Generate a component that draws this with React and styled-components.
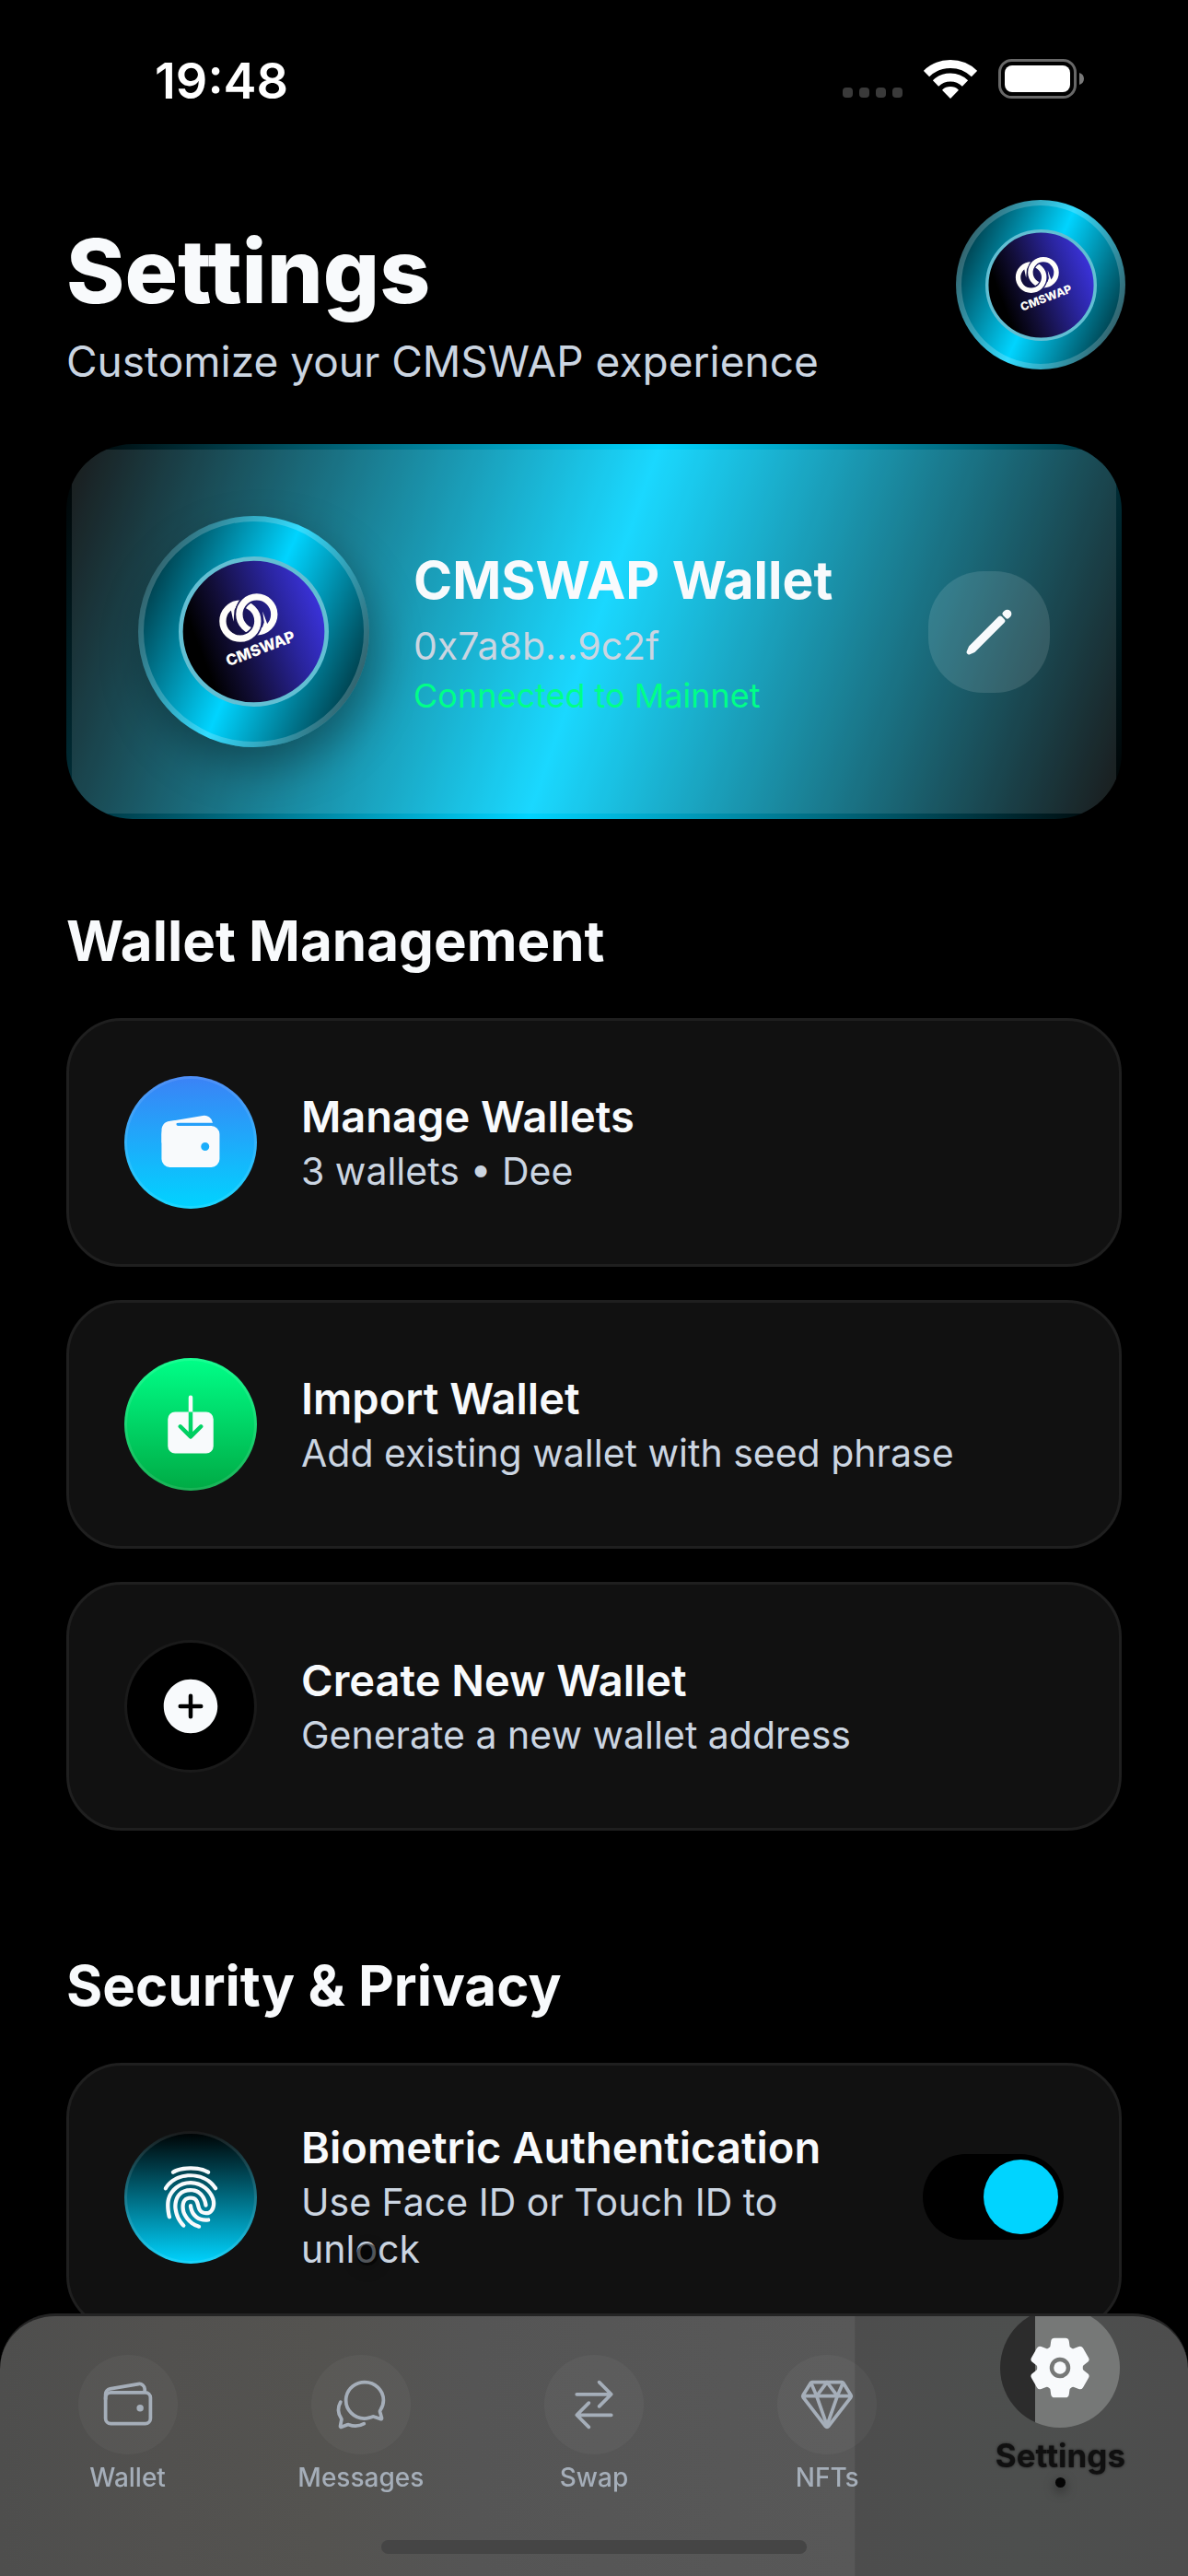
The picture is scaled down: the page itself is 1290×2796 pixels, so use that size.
import React, { useState } from "react";
import styled, { createGlobalStyle } from "styled-components";
import {
  IoWallet,
  IoDownload,
  IoAddCircle,
  IoFingerPrint,
  IoPencil,
  IoWalletOutline,
  IoChatbubblesOutline,
  IoSwapHorizontalOutline,
  IoDiamondOutline,
  IoSettings,
} from "react-icons/io5";

const GlobalStyle = createGlobalStyle`
  *, *::before, *::after { box-sizing: border-box; }
  body {
    margin: 0;
    background: #000;
    color: #f8fafc;
    font-family: Inter, "Liberation Sans", sans-serif;
  }
  h1, h2, h3, p, ul { margin: 0; padding: 0; }
  button { font: inherit; color: inherit; border: 0; padding: 0; cursor: pointer; }
  svg { display: block; flex: none; }
`;

const Screen = styled.div`
  min-height: 100vh;
  overflow: hidden;
`;

/* Status bar */

const StatusBar = styled.div`
  display: flex;
  align-items: flex-start;
  justify-content: space-between;
  height: 177px;
  padding: 56px 112px 0 168px;
`;

const Clock = styled.time`
  font-size: 54px;
  font-weight: 600;
  line-height: 64px;
  color: #fff;
`;

const StatusIcons = styled.div`
  display: flex;
  align-items: flex-end;
  gap: 23px;
  padding-top: 8px;
`;

/* Header */

const Content = styled.main`
  padding: 40px 72px 320px;
`;

const Header = styled.header`
  display: flex;
  align-items: flex-start;
  justify-content: space-between;
  margin-right: -4px;
`;

const HeaderText = styled.div`
  padding-top: 20px;
`;

const Title = styled.h1`
  font-size: 96px;
  font-weight: 800;
  line-height: 115px;
`;

const Subtitle = styled.p`
  margin-top: 12px;
  font-size: 46px;
  line-height: 57px;
  color: #cbd5e1;
`;

const Medallion = styled.div`
  flex: none;
  display: grid;
  place-items: center;
  width: ${(p) => p.$size}px;
  height: ${(p) => p.$size}px;
  border: 6px solid rgba(255, 255, 255, 0.2);
  border-radius: 50%;
  background: linear-gradient(114deg, #000 -4%, #00d4ff 50%, #000 104%) border-box;
  box-shadow: ${(p) => (p.$raised ? "8px 22px 48px rgba(0, 0, 0, 0.35)" : "none")};
`;

/* Wallet card */

const WalletCard = styled.section`
  display: flex;
  margin-top: 61px;
  padding: 6px;
  border-radius: 72px;
  overflow: hidden;
  background: linear-gradient(109.5deg, #000, #00d4ff 50%, #000);
`;

const WalletPane = styled.div`
  flex: 1;
  display: flex;
  align-items: center;
  gap: 48px;
  padding: 72px;
  background: rgba(255, 255, 255, 0.1);
`;

const WalletInfo = styled.div`
  flex: 1;
`;

const WalletName = styled.h2`
  font-size: 57px;
  font-weight: 700;
  line-height: 72px;
`;

const WalletAddress = styled.p`
  margin-top: 10px;
  font-size: 41px;
  line-height: 51px;
  color: #cbd5e1;
`;

const WalletNetwork = styled.p`
  margin-top: 6px;
  font-size: 36px;
  line-height: 45px;
  color: #00ff88;
`;

const EditButton = styled.button`
  display: grid;
  place-items: center;
  width: 132px;
  height: 132px;
  border-radius: 60px;
  background: rgba(255, 255, 255, 0.12);
  color: #f8fafc;
`;

/* Settings sections */

const Section = styled.section`
  margin-top: ${(p) => (p.$first ? 96 : 132)}px;
`;

const SectionTitle = styled.h2`
  font-size: 60px;
  font-weight: 700;
  line-height: 72px;
`;

const Rows = styled.ul`
  display: grid;
  gap: 36px;
  margin-top: 48px;
  list-style: none;
`;

const Row = styled.li`
  display: flex;
  align-items: center;
  gap: 48px;
  width: 100%;
  padding: 60px;
  border: 3px solid #1f1f1f;
  border-radius: 60px;
  background: #111;
`;

const RowIcon = styled.span`
  flex: none;
  display: grid;
  place-items: center;
  width: 144px;
  height: 144px;
  border: 3px solid rgba(255, 255, 255, 0.1);
  border-radius: 50%;
  background: ${(p) => p.$fill} border-box;
  color: #f8fafc;
`;

const RowText = styled.div`
  position: relative;
  flex: 1;
`;

const RowTitle = styled.h3`
  font-size: 47px;
  font-weight: 600;
  line-height: 57px;
`;

const RowNote = styled.p`
  margin-top: 6px;
  font-size: 41px;
  line-height: 51px;
  color: #cbd5e1;
`;

const Particle = styled.span`
  position: absolute;
  bottom: 8px;
  left: 60px;
  width: 24px;
  height: 24px;
  border-radius: 50%;
  background: rgba(0, 0, 0, 0.6);
  box-shadow: 0 4px 16px rgba(0, 0, 0, 0.2);
`;

const Switch = styled.input`
  appearance: none;
  flex: none;
  display: flex;
  align-items: center;
  justify-content: ${(p) => (p.checked ? "flex-end" : "flex-start")};
  width: 153px;
  height: 93px;
  margin: 0;
  padding: 6px;
  border-radius: 47px;
  background: #000;
  cursor: pointer;

  &::before {
    content: "";
    width: 81px;
    height: 81px;
    border-radius: 50%;
    background: #00d4ff;
  }
`;

/* Tab bar */

const TabBar = styled.nav`
  position: fixed;
  right: 0;
  bottom: 0;
  left: 0;
  display: flex;
  flex-direction: column;
  align-items: center;
  justify-content: space-between;
  height: 285px;
  padding-bottom: 24px;
  border-top: 3px solid #242424;
  border-radius: 60px 60px 0 0;
  overflow: hidden;
  background: linear-gradient(
    90deg,
    #4e4e4d,
    #52514f 14%,
    #545350 27%,
    #555 40%,
    #585858 71.9%,
    #4d4d4d 72%,
    #4d4f4e 86%,
    #4d4d4d
  );
`;

const Tabs = styled.div`
  display: flex;
  width: 100%;
  padding: 42px 12px 0;
`;

const Tab = styled.a`
  flex: 1;
  display: flex;
  flex-direction: column;
  align-items: center;
  gap: 9px;
  font-size: 28px;
  font-weight: 500;
  line-height: 33px;
  color: #a5aeb9;
  text-decoration: none;
`;

const TabIcon = styled.span`
  display: grid;
  place-items: center;
  width: 108px;
  height: 108px;
  border-radius: 50%;
  background: rgba(255, 255, 255, 0.04);
`;

const ActiveTab = styled(Tab)`
  gap: 4px;
  margin-top: -51px;
  font-size: 35px;
  font-weight: 700;
  line-height: 39px;
  color: #101010;
  text-shadow: 0 0 3px rgba(0, 0, 0, 0.6);
`;

const ActiveTabIcon = styled(TabIcon)`
  width: 130px;
  height: 130px;
  margin-bottom: 7px;
  background: linear-gradient(90deg, #2c2c2c 29%, #767877 29%);
  color: #f8fafc;
`;

const ActiveDot = styled.span`
  width: 11px;
  height: 11px;
  border-radius: 50%;
  background: #050505;
  box-shadow: 0 4px 12px rgba(0, 0, 0, 0.5);
`;

const HomeIndicator = styled.div`
  width: 462px;
  height: 15px;
  border-radius: 8px;
  background: #454545;
`;

function SignalIcon() {
  return (
    <svg width="65" height="12" fill="#3a3a3a" aria-hidden="true">
      {[0, 18, 36, 54].map((x) => (
        <rect key={x} x={x} y="0" width="11" height="11" rx="4" />
      ))}
    </svg>
  );
}

function WifiIcon() {
  return (
    <svg width="58" height="42" viewBox="0 0 58 42" fill="none" stroke="#fff" strokeWidth="9" aria-hidden="true">
      <path d="M3 15A37.500 37.500 0 0 1 55 15" />
      <path d="M13 25.500A23 23 0 0 1 45 25.500" />
      <path
        d="M29 41 21 32.700C25 28.900 33 28.900 37 32.700Z"
        fill="#fff"
        strokeWidth="1.500"
        strokeLinejoin="round"
      />
    </svg>
  );
}

function BatteryIcon() {
  return (
    <svg width="94" height="43" viewBox="0 0 94 43" aria-hidden="true">
      <rect x="1.500" y="1.500" width="82" height="40" rx="13" fill="none" stroke="#686868" strokeWidth="3" />
      <rect x="7" y="7" width="71" height="29" rx="8" fill="#fff" />
      <path d="M88 15c3 1 5 3 5 6.500s-2 5.500-5 6.500Z" fill="#7a7a7a" />
    </svg>
  );
}

function CmswapLogo({ id, size }) {
  return (
    <svg width={size} height={size} viewBox="-245 -245 490 490" role="img" aria-label="CMSWAP logo">
      <defs>
        <linearGradient id={`${id}-disc`} gradientUnits="userSpaceOnUse" x1="-216" y1="83" x2="216" y2="-83">
          <stop offset="0.1" stopColor="#000" />
          <stop offset="0.35" stopColor="#120e38" />
          <stop offset="0.75" stopColor="#2a25a0" />
          <stop offset="1" stopColor="#3a32d8" />
        </linearGradient>
        <mask id={`${id}-left`} maskUnits="userSpaceOnUse" x="-245" y="-245" width="490" height="490">
          <rect x="-245" y="-245" width="490" height="490" fill="#fff" />
          <path d="M10-113A57 57 0 0 0-47-56" fill="none" stroke="#000" strokeWidth="32" />
        </mask>
        <mask id={`${id}-right`} maskUnits="userSpaceOnUse" x="-245" y="-245" width="490" height="490">
          <rect x="-245" y="-245" width="490" height="490" fill="#fff" />
          <path d="M13-34A57 57 0 0 1-44 23" fill="none" stroke="#000" strokeWidth="32" />
        </mask>
      </defs>
      <circle r="238" fill={`url(#${id}-disc)`} />
      <circle r="238" fill="none" stroke="#62bfd3" strokeWidth="14" />
      <g fill="none" stroke="#fffefa" strokeWidth="22">
        <circle cx="-44" cy="-34" r="57" mask={`url(#${id}-left)`} />
        <circle cx="10" cy="-56" r="57" mask={`url(#${id}-right)`} />
      </g>
      <path d="M-50-101L-76-78-66-32-63-70ZM29-66L34-30 20 10 50-10Z" fill="#fffefa" />
      <text
        transform="translate(28 72) rotate(-21)"
        textAnchor="middle"
        fontFamily="Inter, sans-serif"
        fontSize="50"
        fontWeight="800"
        fill="#fffefa"
      >
        CMSWAP
      </text>
    </svg>
  );
}

const walletRows = [
  {
    title: "Manage Wallets",
    note: "3 wallets • Dee",
    Icon: IoWallet,
    fill: "linear-gradient(180deg, #3b82f6, #00d4ff)",
  },
  {
    title: "Import Wallet",
    note: "Add existing wallet with seed phrase",
    Icon: IoDownload,
    fill: "linear-gradient(180deg, #00ff88, #00aa44)",
  },
  {
    title: "Create New Wallet",
    note: "Generate a new wallet address",
    Icon: IoAddCircle,
    fill: "#000",
  },
];

const tabs = [
  { label: "Wallet", Icon: IoWalletOutline },
  { label: "Messages", Icon: IoChatbubblesOutline },
  { label: "Swap", Icon: IoSwapHorizontalOutline },
  { label: "NFTs", Icon: IoDiamondOutline },
];

export default function App() {
  const [biometric, setBiometric] = useState(true);

  return (
    <Screen>
      <GlobalStyle />
      <StatusBar>
        <Clock>19:48</Clock>
        <StatusIcons>
          <SignalIcon />
          <WifiIcon />
          <BatteryIcon />
        </StatusIcons>
      </StatusBar>

      <Content>
        <Header>
          <HeaderText>
            <Title>Settings</Title>
            <Subtitle>Customize your CMSWAP experience</Subtitle>
          </HeaderText>
          <Medallion $size={184}>
            <CmswapLogo id="header" size={121} />
          </Medallion>
        </Header>

        <WalletCard>
          <WalletPane>
            <Medallion $size={251} $raised>
              <CmswapLogo id="card" size={163} />
            </Medallion>
            <WalletInfo>
              <WalletName>CMSWAP Wallet</WalletName>
              <WalletAddress>0x7a8b...9c2f</WalletAddress>
              <WalletNetwork>Connected to Mainnet</WalletNetwork>
            </WalletInfo>
            <EditButton type="button" aria-label="Edit wallet">
              <IoPencil size={60} />
            </EditButton>
          </WalletPane>
        </WalletCard>

        <Section $first>
          <SectionTitle>Wallet Management</SectionTitle>
          <Rows>
            {walletRows.map(({ title, note, Icon, fill }) => (
              <Row key={title}>
                <RowIcon $fill={fill}>
                  <Icon size={72} />
                </RowIcon>
                <RowText>
                  <RowTitle>{title}</RowTitle>
                  <RowNote>{note}</RowNote>
                </RowText>
              </Row>
            ))}
          </Rows>
        </Section>

        <Section>
          <SectionTitle>Security &amp; Privacy</SectionTitle>
          <Rows>
            <Row>
              <RowIcon $fill="linear-gradient(180deg, #000, #00d4ff)">
                <IoFingerPrint size={72} />
              </RowIcon>
              <RowText>
                <RowTitle as="label" htmlFor="biometric">
                  Biometric Authentication
                </RowTitle>
                <RowNote>Use Face ID or Touch ID to unlock</RowNote>
                <Particle aria-hidden="true" />
              </RowText>
              <Switch
                id="biometric"
                type="checkbox"
                role="switch"
                checked={biometric}
                onChange={(e) => setBiometric(e.target.checked)}
              />
            </Row>
          </Rows>
        </Section>
      </Content>

      <TabBar>
        <Tabs>
          {tabs.map(({ label, Icon }) => (
            <Tab key={label} href={`#${label.toLowerCase()}`}>
              <TabIcon>
                <Icon size={60} />
              </TabIcon>
              {label}
            </Tab>
          ))}
          <ActiveTab href="#settings" aria-current="page">
            <ActiveTabIcon>
              <IoSettings size={72} />
            </ActiveTabIcon>
            Settings
            <ActiveDot />
          </ActiveTab>
        </Tabs>
        <HomeIndicator />
      </TabBar>
    </Screen>
  );
}
